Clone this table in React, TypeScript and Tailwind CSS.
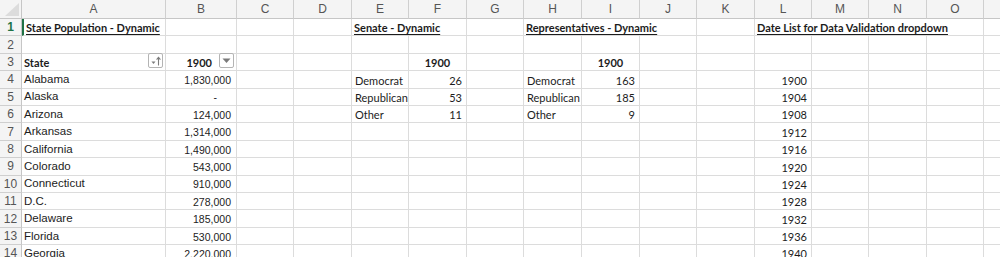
import React from 'react';

type Kind = 'title' | 'bold' | 'center' | 'name' | 'num' | 'dash' | 'cal' | 'calnum';
type Cell = { t: string; k: Kind; span?: number; btn?: 'sort' | 'drop' };

const LETTERS = ['A', 'B', 'C', 'D', 'E', 'F', 'G', 'H', 'I', 'J', 'K', 'L', 'M', 'N', 'O', ''];

const SPAN: Record<number, string> = { 1: '', 2: 'col-span-2', 3: 'col-span-3', 4: 'col-span-4' };

const KIND: Record<Kind, string> = {
  title: "font-[family-name:Lato,sans-serif] font-bold underline underline-offset-[2px] text-[11px] pl-[2px]",
  bold: "font-[family-name:Lato,sans-serif] font-bold text-[11px] pl-[2px]",
  center: "font-[family-name:Lato,sans-serif] font-bold text-[11px] justify-center",
  name: "font-[family-name:'Liberation_Sans',Arial,sans-serif] text-[11.5px] pl-[2px]",
  num: "font-[family-name:'Liberation_Sans',Arial,sans-serif] text-[10.5px] justify-end pr-[5px]",
  dash: "font-[family-name:'Liberation_Sans',Arial,sans-serif] text-[10.5px] justify-end pr-[19px]",
  cal: "font-[family-name:Lato,sans-serif] text-[11px] pl-[3px]",
  calnum: "font-[family-name:Lato,sans-serif] text-[11px] justify-end pr-[4px]",
};

const STATES: Array<[string, string]> = [
  ['Alabama', '1,830,000'],
  ['Alaska', '-'],
  ['Arizona', '124,000'],
  ['Arkansas', '1,314,000'],
  ['California', '1,490,000'],
  ['Colorado', '543,000'],
  ['Connecticut', '910,000'],
  ['D.C.', '278,000'],
  ['Delaware', '185,000'],
  ['Florida', '530,000'],
  ['Georgia', '2,220,000'],
];

const PARTY: Array<[string, string, string]> = [
  ['Democrat', '26', '163'],
  ['Republican', '53', '185'],
  ['Other', '11', '9'],
];

// sheet data keyed by row number, then column letter
const SHEET: Record<number, Record<string, Cell>> = {
  1: {
    A: { t: 'State Population - Dynamic', k: 'title' },
    E: { t: 'Senate - Dynamic', k: 'title', span: 2 },
    H: { t: 'Representatives - Dynamic', k: 'title', span: 3 },
    L: { t: 'Date List for Data Validation dropdown', k: 'title', span: 4 },
  },
  3: {
    A: { t: 'State', k: 'bold', btn: 'sort' },
    B: { t: '1900', k: 'bold', btn: 'drop' },
    F: { t: '1900', k: 'center' },
    I: { t: '1900', k: 'center' },
  },
};

STATES.forEach(([name, pop], i) => {
  const r = i + 4;
  SHEET[r] = { ...(SHEET[r] ?? {}), A: { t: name, k: 'name' }, B: { t: pop, k: pop === '-' ? 'dash' : 'num' }, L: { t: String(1900 + i * 4), k: 'calnum' } };
});
PARTY.forEach(([p, sen, rep], i) => {
  const r = i + 4;
  SHEET[r] = { ...SHEET[r], E: { t: p, k: 'cal' }, F: { t: sen, k: 'calnum' }, H: { t: p, k: 'cal' }, I: { t: rep, k: 'calnum' } };
});

function SortButton() {
  return (
    <span className="flex items-center justify-center w-[15px] h-[15px] bg-white border border-[#b4b4b4] rounded-[2px] shrink-0">
      <svg width="12" height="12" viewBox="0 0 12 12">
        <path d="M1.5 6.5 L5.5 6.5 L3.5 9 Z" fill="#7c7c7c" />
        <path d="M8.5 10.5 V2.5" stroke="#7c7c7c" strokeWidth="1.1" />
        <path d="M6.6 4.6 L8.5 2.3 L10.4 4.6" stroke="#7c7c7c" strokeWidth="1.1" fill="none" />
      </svg>
    </span>
  );
}

function DropButton() {
  return (
    <span className="flex items-center justify-center w-[15px] h-[15px] bg-white border border-[#b4b4b4] rounded-[2px] shrink-0">
      <svg width="9" height="6" viewBox="0 0 9 6">
        <path d="M0.5 0.5 H8.5 L4.5 5 Z" fill="#7a7a7a" />
      </svg>
    </span>
  );
}

function clsxLite(...parts: Array<string | false | undefined>) {
  return parts.filter(Boolean).join(' ');
}

function DataCell({ cell, first }: { cell?: Cell; first?: boolean }) {
  const base = 'flex items-end pb-[2px] min-w-0 whitespace-nowrap leading-none text-[#1c1c1c] border-r border-b border-[#dcdcdc]';
  if (!cell) return <div className={clsxLite(base, first && 'border-l-2 border-l-[#217346]')} />;
  return (
    <div className={clsxLite(base, KIND[cell.k], SPAN[cell.span ?? 1], first && 'border-l-2 border-l-[#217346] pl-[1px]', cell.btn && 'items-center pb-0 pr-[2px]', cell.btn === 'drop' && 'justify-end gap-[7px]')}>
      <span>{cell.t}</span>
      {cell.btn === 'sort' && <span className="ml-auto"><SortButton /></span>}
      {cell.btn === 'drop' && <DropButton />}
    </div>
  );
}

export default function App() {
  const rows = Array.from({ length: 14 }, (_, i) => i + 1);
  return (
    <div className="w-[1000px] h-[257px] overflow-hidden bg-white">
      <div className="grid grid-cols-[22px_144px_71px_57px_58px_57px_58px_57px_58px_58px_57px_58px_57px_57px_58px_57px_57px] grid-rows-[19px_repeat(14,17.4px)] w-[1040px]">
        {/* corner */}
        <div className="relative bg-[#f4f4f4] border-r border-b border-[#c6c6c6]">
          <svg className="absolute right-[2px] bottom-[2px]" width="14" height="13" viewBox="0 0 14 13">
            <path d="M14 0 V13 H0 Z" fill="#dcdcdc" />
          </svg>
        </div>
        {LETTERS.map((l, i) => (
          <div key={i} className="flex items-center justify-center bg-[#f4f4f4] border-r border-b border-[#cfcfcf] border-b-[#c6c6c6] text-[12px] text-[#555] font-[family-name:'Liberation_Sans',Arial,sans-serif]">
            {l}
          </div>
        ))}

        {rows.map((r) => {
          const data = SHEET[r] ?? {};
          const out: React.ReactNode[] = [];
          out.push(
            <div key={`h${r}`} className={clsxLite('flex items-center justify-center bg-[#f4f4f4] border-r border-b border-[#cfcfcf] border-r-[#c6c6c6] text-[12px] font-[family-name:\'Liberation_Sans\',Arial,sans-serif]', r === 1 ? 'text-[#217346] font-bold' : 'text-[#555]')}>
              {r}
            </div>,
          );
          let i = 0;
          while (i < LETTERS.length) {
            const key = 'ABCDEFGHIJKLMNOP'[i];
            const cell = data[key];
            out.push(<DataCell key={`${r}${key}`} cell={cell} first={r === 1 && i === 0} />);
            i += cell?.span ?? 1;
          }
          return out;
        })}
      </div>
    </div>
  );
}
